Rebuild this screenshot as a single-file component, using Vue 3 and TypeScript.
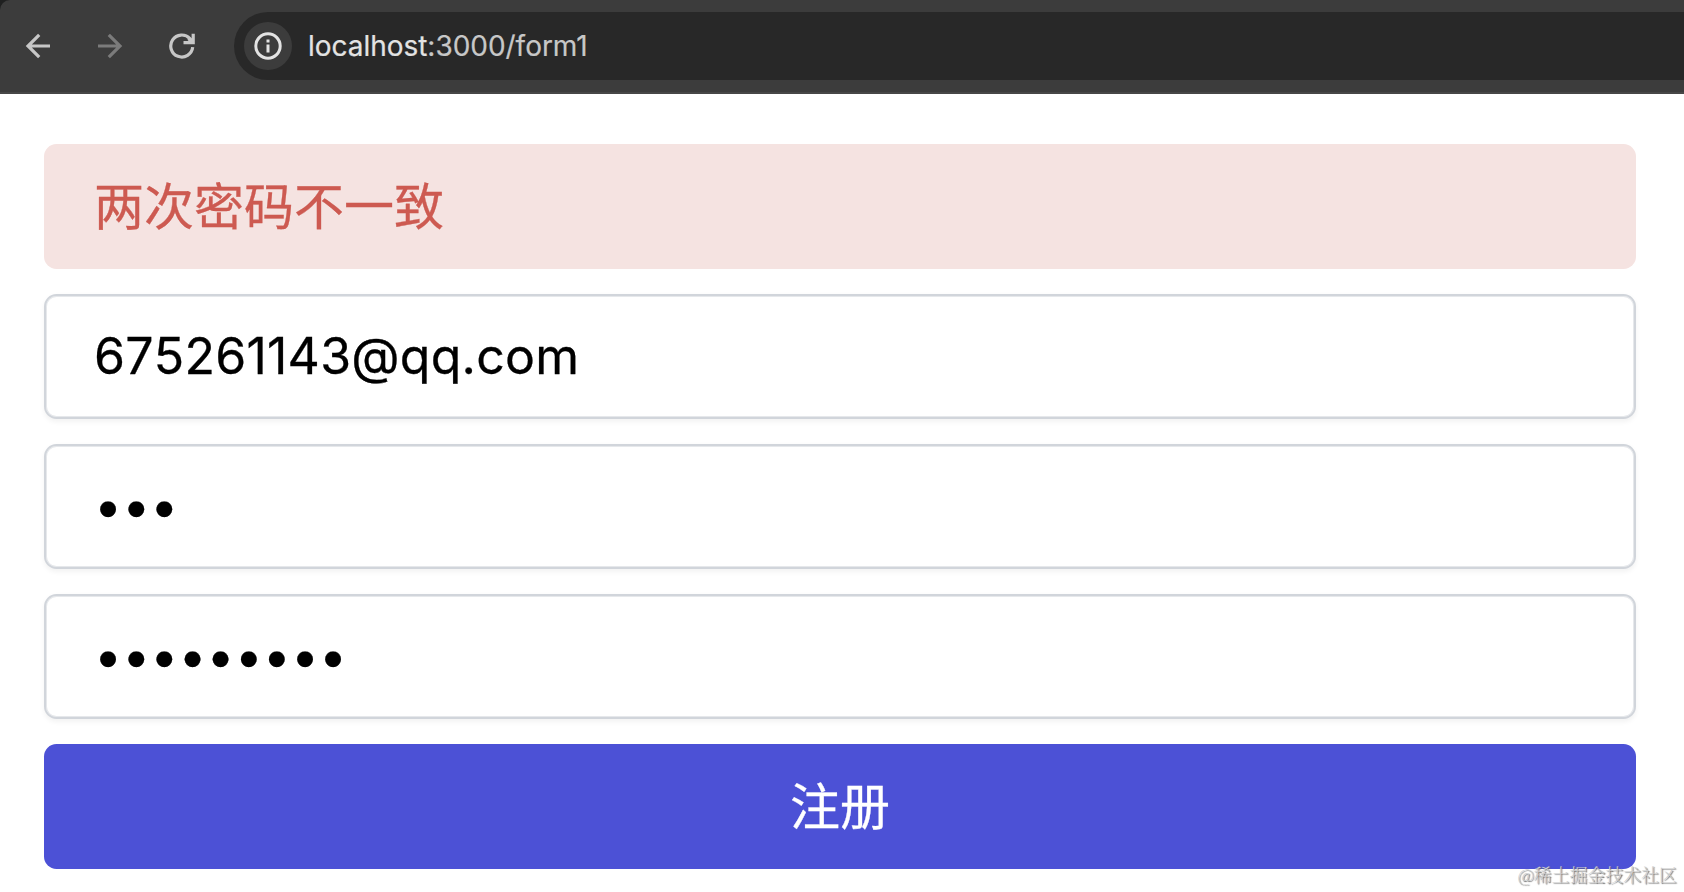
<script setup lang="ts">
/**
 * Register form shown inside a browser window.
 */
import { computed, ref } from 'vue'

// State
const email = ref('675261143@qq.com')
const password = ref('123')
const confirmPassword = ref('123456789')

const errorMessage = computed(() =>
  password.value !== confirmPassword.value ? '两次密码不一致' : '',
)
</script>

<template>
  <div class="window">
    <!-- Browser toolbar -->
    <div class="chrome">
      <header class="toolbar">
        <svg class="nav-icon" viewBox="0 0 28 28">
          <path d="M26 14H4M15.2 2.8L4 14l11.2 11.2" />
        </svg>
        <svg class="nav-icon disabled" viewBox="0 0 28 28">
          <path d="M2 14h22M12.8 2.8L24 14 12.8 25.2" />
        </svg>
        <svg class="nav-icon" viewBox="0 0 28 28">
          <path d="M24.7 15.2A11 11 0 1 1 21.9 6.6L24 8.7" />
          <path d="M25.2 1.7v8.9h-9.7M24.5 10.6l-4-4" />
        </svg>
        <div class="address">
          <span class="info">
            <svg class="info-icon" viewBox="0 0 28 28">
              <circle cx="14" cy="14" r="12.2" />
              <path d="M14 12.5v8M14 7.4v3" />
            </svg>
          </span>
          <span class="url"><span class="host">localhost</span>:3000/form1</span>
        </div>
      </header>
    </div>

    <!-- Form -->
    <form class="form" @submit.prevent>
      <div v-if="errorMessage" class="alert">{{ errorMessage }}</div>
      <input v-model="email" class="field email" type="text" />
      <input v-model="password" class="field" type="password" />
      <input v-model="confirmPassword" class="field" type="password" />
      <button class="submit" type="submit">注册</button>
    </form>

    <span class="watermark">@稀土掘金技术社区</span>
  </div>
</template>

<style>
body {
  margin: 0;
  background: #fff;
}
</style>

<style scoped>
.window {
  position: relative;
  height: 892px;
  overflow: hidden;
  background: #fff;
  font-family: Inter, 'Noto Sans CJK SC', sans-serif;
}

.chrome {
  background: #1f2020;
}

.toolbar {
  display: flex;
  align-items: center;
  box-sizing: border-box;
  height: 94px;
  padding-left: 24px;
  background: #3c3c3c;
  border-bottom: 2px solid #474747;
  border-top-left-radius: 10px;
}

.nav-icon {
  flex: none;
  width: 28px;
  height: 28px;
  margin-right: 44px;
  fill: none;
  stroke: #c7c7c7;
  stroke-width: 3.2;
}

.nav-icon.disabled {
  stroke: #7b7b7b;
}

.address {
  display: flex;
  flex: 1;
  align-items: center;
  box-sizing: border-box;
  height: 68px;
  margin-left: -6px;
  padding-left: 10px;
  background: #282828;
  border-radius: 34px 0 0 34px;
}

.info {
  display: flex;
  align-items: center;
  justify-content: center;
  width: 48px;
  height: 48px;
  background: #3c3c3c;
  border-radius: 50%;
}

.info-icon {
  width: 28px;
  height: 28px;
  fill: none;
  stroke: #e3e3e3;
  stroke-width: 3;
}

.url {
  margin-left: 16px;
  color: #c7c7c7;
  font-size: 28px;
  letter-spacing: -0.03px;
  white-space: nowrap;
  -webkit-text-stroke: 0.2px currentColor;
}

.host {
  color: #e3e3e3;
}

.form {
  display: flex;
  flex-direction: column;
  gap: 25px;
  padding: 50px 48px 0 44px;
}

.alert,
.field,
.submit {
  box-sizing: border-box;
  width: 100%;
  height: 125px;
  border-radius: 12.5px;
  font-family: inherit;
  font-size: 50px;
  -webkit-text-stroke: 0.3px currentColor;
}

.alert {
  padding: 0 50px;
  background: #f5e3e1;
  color: #cd5a51;
  line-height: 126px;
}

.field {
  padding: 0 48px 2px;
  border: 2px solid #d1d5db;
  background: #fff;
  color: #000;
  outline: none;
  box-shadow:
    inset 0 0 0 1px #e6e8eb,
    0 2.5px 5px rgba(0, 0, 0, 0.05);
}

.email {
  font-kerning: none;
  letter-spacing: 0.25px;
}

.submit {
  padding: 0 0 8px;
  border: none;
  background: #4c51d6;
  color: #fff;
}

.watermark {
  position: absolute;
  right: 7px;
  bottom: 6px;
  color: #ccc;
  font-family: 'Noto Serif CJK SC', 'Noto Sans CJK SC', serif;
  font-size: 17.9px;
  font-weight: 300;
  line-height: 24px;
  text-shadow: 1px 1px 1px #666;
}
</style>
